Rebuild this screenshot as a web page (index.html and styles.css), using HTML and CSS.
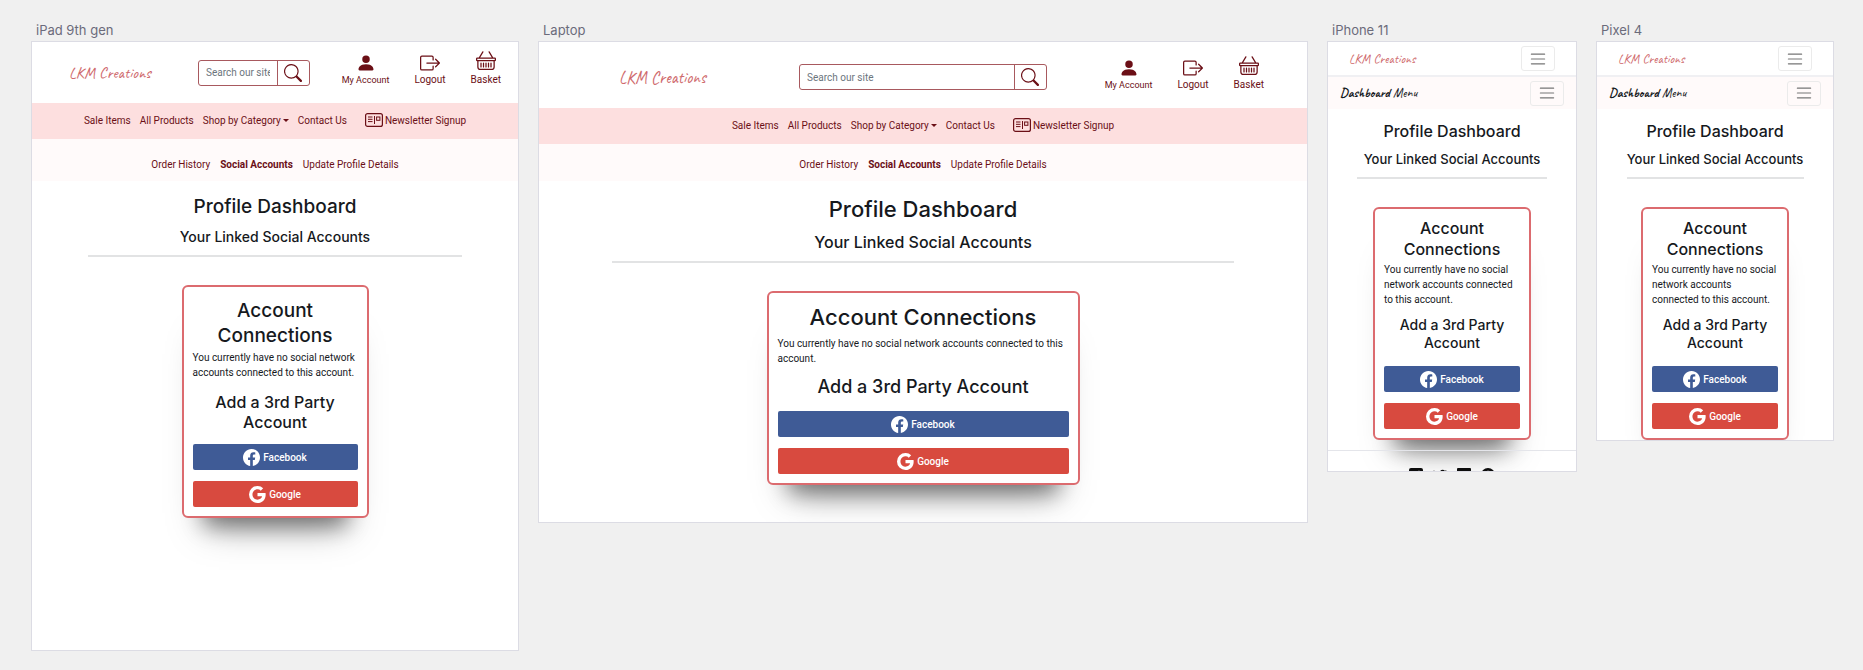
FILE: index.html
```html
<!DOCTYPE html>
<html lang="en">
<head>
<meta charset="utf-8">
<title>LKM Creations – Profile Dashboard</title>
<link rel="stylesheet" href="styles.css">
</head>
<body>
<svg class="sprite" aria-hidden="true">
  <symbol id="person" viewBox="0 0 16 16"><path d="M3 14s-1 0-1-1 1-4 6-4 6 3 6 4-1 1-1 1H3zm5-6a3 3 0 1 0 0-6 3 3 0 0 0 0 6z"/></symbol>
  <symbol id="logout" viewBox="0 0 16 16"><path d="M10 12.500a.5.5 0 0 1-.5.5h-8a.5.5 0 0 1-.5-.5v-9a.5.5 0 0 1 .5-.5h8a.5.5 0 0 1 .5.5v2a.5.5 0 0 0 1 0v-2A1.500 1.500 0 0 0 9.500 2h-8A1.500 1.500 0 0 0 0 3.500v9A1.500 1.500 0 0 0 1.500 14h8a1.500 1.500 0 0 0 1.500-1.500v-2a.5.5 0 0 0-1 0v2z"/><path d="M15.854 8.354a.5.5 0 0 0 0-.708l-3-3a.5.5 0 0 0-.708.708L14.293 7.500H5.500a.5.5 0 0 0 0 1h8.793l-2.147 2.146a.5.5 0 0 0 .708.708l3-3z"/></symbol>
  <symbol id="basket" viewBox="0 0 16 16"><path fill-rule="evenodd" d="M5.757 1.071a.5.5 0 0 1 .172.686L3.383 6h9.234L10.070 1.757a.5.5 0 1 1 .858-.514L13.783 6H15a1 1 0 0 1 1 1v1a1 1 0 0 1-1 1v4.500a2.500 2.500 0 0 1-2.500 2.500h-9A2.500 2.500 0 0 1 1 13.500V9a1 1 0 0 1-1-1V7a1 1 0 0 1 1-1h1.217L5.070 1.243a.5.5 0 0 1 .686-.172zM2 9v4.500A1.500 1.500 0 0 0 3.500 15h9a1.500 1.500 0 0 0 1.500-1.500V9H2zM1 7v1h14V7H1z"/><path d="M4 10.500v3M6 10.500v3M8 10.500v3M10 10.500v3M12 10.500v3" stroke="currentColor" stroke-linecap="round"/></symbol>
  <symbol id="search" viewBox="0 0 16 16"><path d="M11.742 10.344a6.500 6.500 0 1 0-1.397 1.398h-.001c.03.04.062.078.098.115l3.850 3.850a1 1 0 0 0 1.415-1.414l-3.850-3.850a1.007 1.007 0 0 0-.115-.1zM12 6.500a5.500 5.500 0 1 1-11 0 5.500 5.500 0 0 1 11 0z"/></symbol>
  <symbol id="news" viewBox="0 0 18 14"><g fill="none" stroke="currentColor"><rect x=".6" y=".6" width="16.800" height="12.800" rx="2" stroke-width="1.200"/><path d="M3 4h4.500M3 6.300h4.500M3 8.600h4.500M9.500 3v8"/><rect x="11.600" y="4" width="3.300" height="3.300"/></g></symbol>
  <symbol id="facebook" viewBox="0 0 16 16"><path d="M16 8.049c0-4.446-3.582-8.050-8-8.050C3.580 0-.002 3.603-.002 8.050c0 4.017 2.926 7.347 6.750 7.951v-5.625h-2.030V8.050H6.750V6.275c0-2.017 1.195-3.131 3.022-3.131.876 0 1.791.157 1.791.157v1.980h-1.009c-.993 0-1.303.621-1.303 1.258v1.510h2.218l-.354 2.326H9.250V16c3.824-.604 6.750-3.934 6.750-7.951z"/></symbol>
  <symbol id="google" viewBox="0 0 16 16"><path d="M15.545 6.558a9.420 9.420 0 0 1 .139 1.626c0 2.434-.87 4.492-2.384 5.885h.002C11.978 15.292 10.158 16 8 16A8 8 0 1 1 8 0a7.689 7.689 0 0 1 5.352 2.082l-2.284 2.284A4.347 4.347 0 0 0 8 3.166c-2.087 0-3.860 1.408-4.492 3.304a4.792 4.792 0 0 0 0 3.063h.003c.635 1.893 2.405 3.301 4.492 3.301 1.078 0 2.004-.276 2.722-.764h-.003a3.702 3.702 0 0 0 1.599-2.431H8v-3.080h7.545z"/></symbol>
  <symbol id="menu" viewBox="0 0 30 30"><path d="M4 7h22M4 15h22M4 23h22" fill="none" stroke="currentColor" stroke-width="2" stroke-linecap="round"/></symbol>
  <symbol id="fb-square" viewBox="0 0 14 14"><path fill-rule="evenodd" d="M2 0h10a2 2 0 0 1 2 2v10a2 2 0 0 1-2 2H9.500V9h2V7h-2V5.500q0-1 2-1V3Q7.500 2 7.500 5.500V7H6v2h1.500v5H2a2 2 0 0 1-2-2V2a2 2 0 0 1 2-2z"/></symbol>
  <symbol id="twitter" viewBox="0 0 16 16"><path d="M5.026 15c6.038 0 9.341-5.003 9.341-9.334 0-.14 0-.282-.006-.422A6.685 6.685 0 0 0 16 3.542a6.658 6.658 0 0 1-1.889.518 3.301 3.301 0 0 0 1.447-1.817 6.533 6.533 0 0 1-2.087.793A3.286 3.286 0 0 0 7.875 6.030a9.325 9.325 0 0 1-6.767-3.429 3.289 3.289 0 0 0 1.018 4.382A3.323 3.323 0 0 1 .64 6.575v.045a3.288 3.288 0 0 0 2.632 3.218 3.203 3.203 0 0 1-.865.115c-.207 0-.415-.02-.614-.057a3.283 3.283 0 0 0 3.067 2.277A6.600 6.600 0 0 1 .78 13.580 6.320 6.320 0 0 1 0 13.540 9.344 9.344 0 0 0 5.026 15z"/></symbol>
  <symbol id="linkedin" viewBox="0 0 14 14"><path fill-rule="evenodd" d="M1 0h12a1 1 0 0 1 1 1v12a1 1 0 0 1-1 1H1a1 1 0 0 1-1-1V1a1 1 0 0 1 1-1zM2 5.500v6h2v-6zM2 3v1.500h2V3zM5.500 5.500v6h2v-4h2v4h2V7q-1-2-4-1v-.5z"/></symbol>
  <symbol id="pinterest" viewBox="0 0 14 14"><circle cx="7" cy="7" r="7"/><path d="M5.500 12 7 6M4.500 7.500Q3 4 7 3.500q4 0 3 3.500-2 3-3.500 1.500" fill="none" stroke="#fff" stroke-width="1.500"/></symbol>
</svg>

<main class="board">
  <section class="device tablet">
    <h2 class="device-name">iPad 9th gen</h2>
    <div class="screen">
      <header class="header">
        <a class="logo" href="#">LKM Creations</a>
        <form class="search">
          <input type="text" placeholder="Search our site" aria-label="Search our site">
          <button type="button" aria-label="Search"><svg class="icon-search"><use href="#search"/></svg></button>
        </form>
        <div class="actions">
          <a class="action account" href="#"><svg><use href="#person"/></svg>My Account</a>
          <a class="action" href="#"><svg><use href="#logout"/></svg>Logout</a>
          <a class="action basket" href="#"><svg><use href="#basket"/></svg>Basket</a>
        </div>
      </header>
      <nav class="nav">
        <a href="#">Sale Items</a><a href="#">All Products</a><a class="dropdown" href="#">Shop by Category</a><a href="#">Contact Us</a>
        <a class="newsletter" href="#"><svg><use href="#news"/></svg>Newsletter Signup</a>
      </nav>
      <nav class="subnav">
        <a href="#">Order History</a><a class="current" href="#">Social Accounts</a><a href="#">Update Profile Details</a>
      </nav>
      <div class="content">
        <h1 class="title">Profile Dashboard</h1>
        <h2 class="subtitle">Your Linked Social Accounts</h2>
        <hr class="rule">
        <div class="card">
          <h2 class="title">Account Connections</h2>
          <p>You currently have no social network accounts connected to this account.</p>
          <h3 class="add">Add a 3rd Party Account</h3>
          <button type="button" class="social facebook"><svg><use href="#facebook"/></svg>Facebook</button>
          <button type="button" class="social google"><svg><use href="#google"/></svg>Google</button>
        </div>
      </div>
    </div>
  </section>

  <section class="device laptop">
    <h2 class="device-name">Laptop</h2>
    <div class="screen">
      <header class="header">
        <a class="logo" href="#">LKM Creations</a>
        <form class="search">
          <input type="text" placeholder="Search our site" aria-label="Search our site">
          <button type="button" aria-label="Search"><svg class="icon-search"><use href="#search"/></svg></button>
        </form>
        <div class="actions">
          <a class="action account" href="#"><svg><use href="#person"/></svg>My Account</a>
          <a class="action" href="#"><svg><use href="#logout"/></svg>Logout</a>
          <a class="action basket" href="#"><svg><use href="#basket"/></svg>Basket</a>
        </div>
      </header>
      <nav class="nav">
        <a href="#">Sale Items</a><a href="#">All Products</a><a class="dropdown" href="#">Shop by Category</a><a href="#">Contact Us</a>
        <a class="newsletter" href="#"><svg><use href="#news"/></svg>Newsletter Signup</a>
      </nav>
      <nav class="subnav">
        <a href="#">Order History</a><a class="current" href="#">Social Accounts</a><a href="#">Update Profile Details</a>
      </nav>
      <div class="content">
        <h1 class="title">Profile Dashboard</h1>
        <h2 class="subtitle">Your Linked Social Accounts</h2>
        <hr class="rule">
        <div class="card">
          <h2 class="title">Account Connections</h2>
          <p>You currently have no social network accounts connected to this account.</p>
          <h3 class="add">Add a 3rd Party Account</h3>
          <button type="button" class="social facebook"><svg><use href="#facebook"/></svg>Facebook</button>
          <button type="button" class="social google"><svg><use href="#google"/></svg>Google</button>
        </div>
      </div>
    </div>
  </section>

  <section class="device phone iphone">
    <h2 class="device-name">iPhone 11</h2>
    <div class="screen">
      <header class="bar">
        <a class="logo" href="#">LKM Creations</a>
        <button type="button" class="toggler" aria-label="Toggle navigation"><svg><use href="#menu"/></svg></button>
      </header>
      <nav class="bar dash">
        <a class="menu-name" href="#"><b>Dashboard</b> Menu</a>
        <button type="button" class="toggler" aria-label="Toggle dashboard menu"><svg><use href="#menu"/></svg></button>
      </nav>
      <div class="content">
        <h1 class="title">Profile Dashboard</h1>
        <h2 class="subtitle">Your Linked Social Accounts</h2>
        <hr class="rule">
        <div class="card">
          <h2 class="title">Account Connections</h2>
          <p>You currently have no social network accounts connected to this account.</p>
          <h3 class="add">Add a 3rd Party Account</h3>
          <button type="button" class="social facebook"><svg><use href="#facebook"/></svg>Facebook</button>
          <button type="button" class="social google"><svg><use href="#google"/></svg>Google</button>
        </div>
      </div>
      <footer class="footer">
        <a href="#" aria-label="Facebook"><svg><use href="#fb-square"/></svg></a>
        <a href="#" aria-label="Twitter"><svg><use href="#twitter"/></svg></a>
        <a href="#" aria-label="LinkedIn"><svg><use href="#linkedin"/></svg></a>
        <a href="#" aria-label="Pinterest"><svg><use href="#pinterest"/></svg></a>
      </footer>
    </div>
  </section>

  <section class="device phone pixel">
    <h2 class="device-name">Pixel 4</h2>
    <div class="screen">
      <header class="bar">
        <a class="logo" href="#">LKM Creations</a>
        <button type="button" class="toggler" aria-label="Toggle navigation"><svg><use href="#menu"/></svg></button>
      </header>
      <nav class="bar dash">
        <a class="menu-name" href="#"><b>Dashboard</b> Menu</a>
        <button type="button" class="toggler" aria-label="Toggle dashboard menu"><svg><use href="#menu"/></svg></button>
      </nav>
      <div class="content">
        <h1 class="title">Profile Dashboard</h1>
        <h2 class="subtitle">Your Linked Social Accounts</h2>
        <hr class="rule">
        <div class="card">
          <h2 class="title">Account Connections</h2>
          <p>You currently have no social network accounts connected to this account.</p>
          <h3 class="add">Add a 3rd Party Account</h3>
          <button type="button" class="social facebook"><svg><use href="#facebook"/></svg>Facebook</button>
          <button type="button" class="social google"><svg><use href="#google"/></svg>Google</button>
        </div>
      </div>
    </div>
  </section>
</main>
</body>
</html>
```
FILE: styles.css
```css
* { box-sizing: border-box; }

body {
  margin: 0;
  background: #f0f0f0;
  color: #16191d;
  font-family: Roboto, "Liberation Sans", sans-serif;
  font-size: 10px;
}

h1, h2, h3, p { margin: 0; font-weight: 500; }
h1, h2, h3 { font-family: Inter, "Liberation Sans", sans-serif; }
a { color: inherit; text-decoration: none; }
button, input { font: inherit; color: inherit; }
svg { fill: currentColor; flex: none; }
.sprite { display: none; }

/* Board of device previews */
.board {
  display: grid;
  grid-template-columns: minmax(0, 488fr) minmax(0, 770fr) minmax(0, 250fr) minmax(0, 238fr);
  gap: 19px;
  align-items: start;
  padding: 21px 29px 18px 31px;
}

.device-name {
  padding-left: 5px;
  margin-bottom: 2px;
  color: #6b6b7b;
  font-size: 13px;
  font-weight: 400;
  line-height: 18px;
}

.screen {
  overflow: hidden;
  border: 1px solid #dcdce4;
  background: #fff;
}
.tablet .screen { aspect-ratio: 488 / 610; }
.laptop .screen { aspect-ratio: 770 / 482; }
.iphone .screen { aspect-ratio: 250 / 431; }
.pixel .screen { aspect-ratio: 238 / 400; }

/* Shop header */
.logo, .menu-name {
  font-family: Caveat, cursive;
  white-space: nowrap;
}
.logo { color: #cf6a6d; }

.header {
  display: flex;
  align-items: center;
  height: 61px;
  padding: 0 17px 0 37px;
  color: #6b0f16;
}
.header .logo { width: 129px; font-size: 16px; }
.laptop .header { height: 66px; padding: 4px 43px 0 80px; }
.laptop .header .logo { width: 180px; font-size: 17px; }

.search {
  display: flex;
  flex: 1;
  min-width: 0;
  height: 26px;
  border: 1px solid #a8595e;
  border-radius: 3px;
}
.search input {
  flex: 1;
  min-width: 0;
  padding: 0 7px;
  border: 0;
  background: none;
  outline: 0;
}
.search input::placeholder { color: #6c757d; opacity: 1; }
.search button {
  display: grid;
  place-items: center;
  width: 32px;
  padding: 0;
  border: 0;
  border-left: 1px solid #a8595e;
  background: none;
}
.icon-search { width: 18px; height: 18px; }

.actions {
  display: flex;
  align-items: flex-end;
  gap: 25px;
  margin-left: 32px;
  padding-bottom: 8px;
}
.laptop .actions { margin-left: 58px; }
.action {
  display: flex;
  flex-direction: column;
  align-items: center;
  line-height: 14px;
  white-space: nowrap;
}
.action svg { width: 20px; height: 20px; }
.account { font-size: 9px; }
.basket svg { margin-bottom: 3px; }

/* Navigation rows */
.nav, .subnav {
  display: flex;
  justify-content: center;
  align-items: center;
  gap: 10px;
  color: #6b0f16;
  white-space: nowrap;
}
.nav { height: 36px; gap: 9px; padding-bottom: 2px; background: #fddfdf; }
.subnav { height: 42px; padding-top: 9px; background: #fffafa; }
.laptop .subnav { height: 37px; padding-top: 4px; }
.current { font-weight: 700; }

.dropdown { display: flex; align-items: center; gap: 2px; }
.dropdown::after {
  content: "";
  border: 3px solid transparent;
  border-top-color: currentColor;
  border-bottom: 0;
}
.newsletter { display: flex; align-items: center; gap: 2px; margin-left: 9px; }
.newsletter svg { width: 18px; height: 14px; }

/* Phone bars */
.bar {
  display: flex;
  align-items: center;
  justify-content: space-between;
  height: 35px;
  padding: 0 21px;
  border-bottom: 2px solid #f0f0f3;
}
.bar .logo, .menu-name { font-size: 13px; }
.dash {
  height: 32px;
  padding: 0 12px;
  border: 0;
  background: #fffafa;
}
.menu-name { color: #16191d; }
.toggler {
  display: grid;
  place-items: center;
  width: 34px;
  height: 25px;
  padding: 0;
  border: 1px solid #ebebeb;
  border-radius: 3px;
  background: none;
  color: #767676;
}
.toggler svg { width: 18px; height: 18px; }

/* Profile page */
.content { padding-top: 13px; text-align: center; }
.title { font-size: 19px; line-height: 25px; }
.subtitle { margin-top: 8px; font-size: 14px; line-height: 20px; }
.rule {
  width: 77%;
  height: 2px;
  margin: 8px auto 28px;
  border: 0;
  background: #e2e3e4;
}
.card {
  display: flex;
  flex-direction: column;
  width: 187px;
  margin: 0 auto;
  padding: 11px 9px 9px;
  border: 2px solid #dc6b6f;
  border-radius: 6px;
  background: #fff;
  box-shadow: 0 30px 20px -22px rgba(0, 0, 0, .4), 0 32px 36px -24px rgba(0, 0, 0, .35);
}
.card p {
  margin: 2px 0 12px;
  font-weight: 400;
  line-height: 15px;
  text-align: left;
}
.add { margin-bottom: 12px; font-size: 16px; line-height: 20px; }
.social {
  display: flex;
  align-items: center;
  justify-content: center;
  gap: 3px;
  height: 26px;
  padding: 0;
  border: 0;
  border-radius: 2px;
  color: #fff;
  font-weight: 500;
}
.social svg { width: 17px; height: 17px; }
.facebook { margin-bottom: 11px; background: #3f5b96; }
.google { background: #d84a3f; }

.laptop .content { padding-top: 14px; }
.laptop .title { font-size: 22px; line-height: 28px; }
.laptop .subtitle { margin-top: 9px; font-size: 16px; }
.laptop .rule { width: 81%; margin-top: 9px; }
.laptop .card { width: 313px; padding-top: 10px; }
.laptop .card p { margin: 5px 0 9px; }
.laptop .add { font-size: 18px; line-height: 24px; }

.phone .content { padding-top: 12px; }
.phone .title { font-size: 16px; line-height: 20px; }
.phone .subtitle { margin-top: 8px; font-size: 13px; }
.phone .card { width: 158px; padding-top: 9px; }
.phone .card .title { line-height: 21px; }
.phone .card p { margin-bottom: 9px; }
.phone .add { margin-bottom: 14px; font-size: 14px; line-height: 18px; }
.pixel .rule { width: 75%; }
.phone.pixel .card { width: 148px; }

.footer {
  display: flex;
  justify-content: center;
  gap: 10px;
  margin-top: 10px;
  padding-top: 17px;
  border-top: 1px solid #e4e5ea;
  color: #0c0c0c;
}
.footer svg { display: block; width: 14px; height: 14px; }
```
